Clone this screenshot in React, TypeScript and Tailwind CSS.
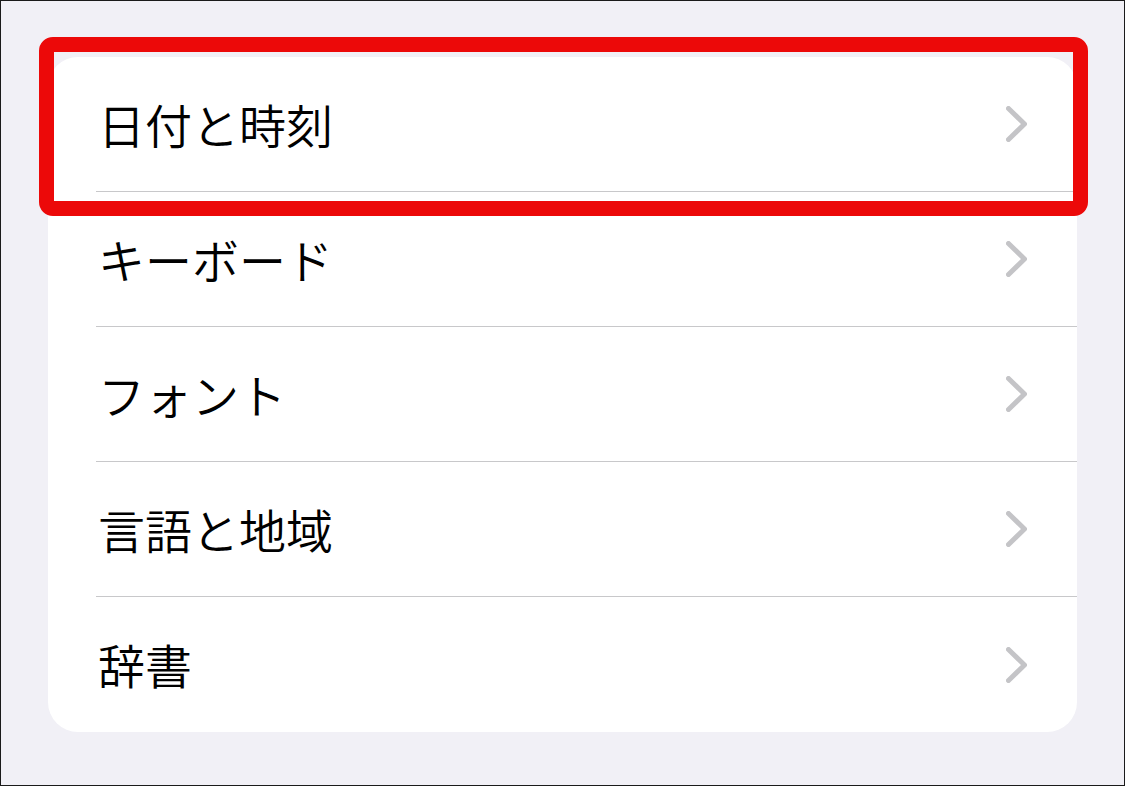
const items = ['日付と時刻', 'キーボード', 'フォント', '言語と地域', '辞書'];

function Chevron() {
  return (
    <svg width="21" height="36" viewBox="0 0 21 36" fill="none">
      <polyline
        points="2.5,2.5 18.5,18 2.5,33.5"
        stroke="#c4c4c7"
        strokeWidth="5"
        strokeLinecap="round"
        strokeLinejoin="round"
      />
    </svg>
  );
}

export default function App() {
  return (
    <div
      className="relative w-[1125px] h-[786px] border border-[#1a1a1a] bg-[#f1f0f6] overflow-hidden"
      style={{ fontFamily: '"Noto Sans CJK JP", "Noto Sans", sans-serif' }}
    >
      {/* Settings group */}
      <div className="ml-[47px] mt-[56px] w-[1029px] rounded-[30px] bg-white overflow-hidden">
        {items.map((label, i) => (
          <div key={label} className="pl-[48px]">
            <div
              className={`flex items-center justify-between pr-[50px] h-[135px] ${
                i < items.length - 1 ? 'border-b border-[#c8c8ca]' : ''
              }`}
            >
              <span className="pl-[2px] pb-[2px] text-[47px] font-[350] leading-none text-black">
                {label}
              </span>
              <Chevron />
            </div>
          </div>
        ))}
      </div>

      {/* Highlight frame */}
      <div className="absolute left-[38px] top-[36px] w-[1049px] h-[179px] rounded-[14px] border-[15px] border-[#ec0909]" />
    </div>
  );
}
